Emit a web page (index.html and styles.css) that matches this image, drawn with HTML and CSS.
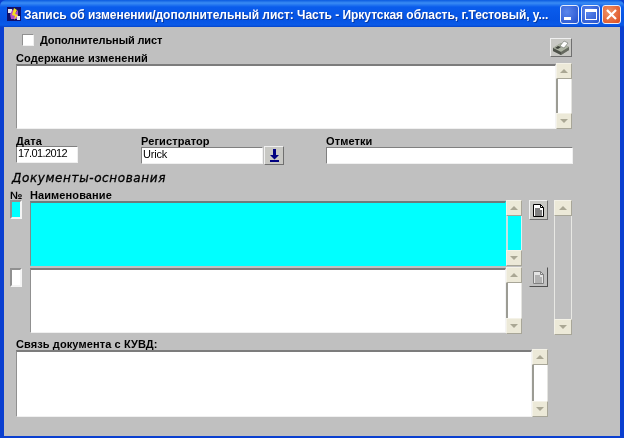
FILE: index.html
```html
<!DOCTYPE html>
<html lang="ru">
<head>
<meta charset="utf-8">
<title>Запись об изменении</title>
<link rel="stylesheet" href="styles.css">
</head>
<body>
<div class="window">
  <header class="titlebar">
    <svg class="app-icon" width="14" height="14" viewBox="0 0 14 14">
      <rect width="14" height="14" fill="#10106a"/>
      <rect x="1" y="2" width="4" height="4" fill="#e8e8f0"/>
      <path d="M3 7l3-5 2 4 3-3v9H4z" fill="#b050c8"/>
      <path d="M7 1l3 2-2 4 3 1-4 5 1-4-3-1z" fill="#f4e020"/>
      <rect x="10" y="9" width="3" height="4" fill="#e8e8f0"/>
    </svg>
    <div class="title-text">Запись об изменении/дополнительный лист: Часть - Иркутская область, г.Тестовый, у...</div>
    <div class="controls">
      <div class="ctl"><span class="min-glyph"></span></div>
      <div class="ctl"><span class="max-glyph"></span></div>
      <div class="ctl close">
        <svg width="13" height="13" viewBox="0 0 13 13"><path d="M2 2l9 9M11 2l-9 9" stroke="#fff" stroke-width="2.2" fill="none"/></svg>
      </div>
    </div>
  </header>
  <main class="client">
    <section class="top">
      <div class="head">
        <div>
          <div class="check-row">
            <span class="checkbox"></span>
            <span class="label check-label">Дополнительный лист</span>
          </div>
          <div class="label content-label">Содержание изменений</div>
        </div>
        <div class="btn print-btn">
          <svg width="18" height="16" viewBox="0 0 18 16">
            <path d="M1 8l8-5 8 4v3l-8 5-8-4z" fill="#7f8478"/>
            <path d="M1 8l8 4 8-5-8-4z" fill="#aeb4a4"/>
            <path d="M1 8l8 4v3l-8-4z" fill="#4e524a"/>
            <path d="M9 12l8-5v3l-8 5z" fill="#666a60"/>
            <path d="M8 6l4-5 4 2-4 5z" fill="#fff" stroke="#6a6e66" stroke-width=".6"/>
            <path d="M3 8l3-2 3 1-3 2z" fill="#3e423a"/>
          </svg>
        </div>
      </div>
      <div class="editor-row">
        <div class="field-box content-box"></div>
        <div class="sb">
          <div class="sb-btn"><span class="up"></span></div>
          <div class="sb-track"></div>
          <div class="sb-btn"><span class="down"></span></div>
        </div>
      </div>
    </section>

    <section class="meta">
      <div class="field date-field">
        <div class="label meta-label">Дата</div>
        <div class="input">17.01.2012</div>
      </div>
      <div class="field reg-field">
        <div class="label meta-label">Регистратор</div>
        <div class="input-group">
          <div class="input reg-input">Urick</div>
          <div class="btn arrow-btn">
            <svg width="9" height="13" viewBox="0 0 9 13"><path d="M3 0h3v6h3l-4.500 4.500L0 6h3z" fill="#000080"/><rect y="11" width="9" height="2" fill="#000080"/></svg>
          </div>
        </div>
      </div>
      <div class="field note-field">
        <div class="label meta-label">Отметки</div>
        <div class="input"></div>
      </div>
    </section>

    <h2 class="docs-title">Документы-основания</h2>
    <div class="docs-head">
      <span class="label num-col">№</span>
      <span class="label">Наименование</span>
    </div>
    <section class="docs">
      <div class="doc-rows">
        <div class="doc-row row-one">
          <div class="indicator current"></div>
          <div class="field-box doc-box current"></div>
          <div class="sb">
            <div class="sb-btn"><span class="up"></span></div>
            <div class="sb-track cyan"></div>
            <div class="sb-btn"><span class="down"></span></div>
          </div>
          <div class="btn doc-btn">
            <svg width="11" height="13" viewBox="0 0 11 13"><path d="M.5.5h7l3 3v9H.5z" fill="#fff" stroke="#000"/><path d="M7.500.5v3h3" fill="none" stroke="#000"/><path d="M2 5h5M2 7h7M2 9h7M2 11h7" stroke="#000"/></svg>
          </div>
        </div>
        <div class="doc-row row-two">
          <div class="indicator"></div>
          <div class="field-box doc-box"></div>
          <div class="sb">
            <div class="sb-btn"><span class="up"></span></div>
            <div class="sb-track"></div>
            <div class="sb-btn"><span class="down"></span></div>
          </div>
          <div class="btn doc-btn flat">
            <svg width="11" height="13" viewBox="0 0 11 13"><path d="M.5.5h7l3 3v9H.5z" fill="#e4e4e4" stroke="#808080"/><path d="M7.500.5v3h3" fill="none" stroke="#808080"/><path d="M2 5h5M2 7h7M2 9h7M2 11h7" stroke="#808080"/></svg>
          </div>
        </div>
      </div>
      <div class="sb outer-sb">
        <div class="sb-btn"><span class="up"></span></div>
        <div class="sb-track grey"></div>
        <div class="sb-btn"><span class="down"></span></div>
      </div>
    </section>

    <section class="link">
      <div class="label link-label">Связь документа с КУВД:</div>
      <div class="editor-row link-row">
        <div class="field-box link-box"></div>
        <div class="sb">
          <div class="sb-btn"><span class="up"></span></div>
          <div class="sb-track"></div>
          <div class="sb-btn"><span class="down"></span></div>
        </div>
      </div>
    </section>
  </main>
</div>
</body>
</html>
```
FILE: styles.css
```css
* { box-sizing: border-box; }
html, body { margin: 0; padding: 0; }
body { width: 624px; height: 438px; overflow: hidden; background: #c0c0c0; }

.window {
  width: 624px; height: 438px;
  display: flex; flex-direction: column;
  background: #0a3fd0;
  font-family: "Liberation Sans", Arial, sans-serif;
  filter: blur(0.35px);
}

.titlebar {
  height: 27px; flex: none;
  display: flex; align-items: center;
  padding: 1px 3px 0 7px;
  background: linear-gradient(#0a5ae0 0, #3a8cf4 3px, #0a5cec 7px, #0654e4 20px, #0a5ae8 25px, #0644c8 27px);
  border-radius: 6px 6px 0 0;
}
.app-icon { flex: none; }
.title-text {
  flex: 1; margin-left: 3px; min-width: 0; padding-top: 1px;
  color: #fff; font-size: 12px; font-weight: 700; letter-spacing: -0.03px;
  white-space: nowrap;
  text-shadow: 1px 1px 0 #0a3aa0;
}
.controls { display: flex; gap: 2px; flex: none; }
.ctl {
  width: 19px; height: 19px;
  display: flex; align-items: center; justify-content: center;
  background: radial-gradient(circle at 35% 35%, #5a86ec, #2450cc);
  border: 1px solid #e8eefc; border-radius: 3px;
}
.ctl.close { background: radial-gradient(circle at 35% 35%, #f09468, #dc4a1c); }
.min-glyph { width: 7px; height: 3px; background: #fff; margin: 9px 5px 0 0; }
.max-glyph { width: 12px; height: 11px; border: 1px solid #fff; border-top-width: 3px; }

.client {
  flex: 1; margin: 0 4px 2px 4px;
  background: #c0c0c0;
  min-height: 0;
}

.label {
  font-size: 11px; line-height: 11px; font-weight: 700; color: #000;
  letter-spacing: 0.1px; white-space: nowrap;
}
.check-label { letter-spacing: -0.12px; }

.top { padding: 7px 47px 0 12px; }
.head { display: flex; justify-content: space-between; height: 29px; }
.check-row { display: flex; align-items: center; margin-left: 6px; height: 12px; gap: 6px; }
.checkbox {
  width: 12px; height: 12px; background: #fff;
  border: 1px solid; border-color: #909090 #f0f0f0 #f0f0f0 #909090;
}
.content-label { margin-top: 7px; }
.print-btn { width: 22px; height: 19px; margin: 4px 1px 0 0; }

.btn {
  display: flex; align-items: center; justify-content: center;
  background: #c8c8c4; flex: none;
  border: 1px solid; border-color: #f0f0f0 #707070 #707070 #f0f0f0;
}

.editor-row { display: flex; }
.field-box {
  background: #fff;
  border-style: solid; border-width: 2px 1px 1px 1px;
  border-color: #7c7c7c #f4f4f4 #f0f0f0 #909090;
}
.top .editor-row { height: 66px; }
.content-box { width: 540px; margin-top: 1px; }

.sb { width: 16px; flex: none; display: flex; flex-direction: column; }
.sb-btn {
  height: 16px; flex: none;
  display: flex; align-items: center; justify-content: center;
  background: #ece9d8;
  border: 1px solid; border-color: #f4f2e8 #a8a698 #a8a698 #f4f2e8;
}
.up { border: 4px solid transparent; border-top-width: 0; border-bottom-color: #aaa794; }
.down { border: 4px solid transparent; border-bottom-width: 0; border-top-color: #aaa794; }
.sb-track {
  flex: 1; background: #fff;
  border-left: 2px solid #9c9c94; border-right: 1px solid #e4e4e0;
}
.sb-track.grey { background: #c0c0c0; border-left: 1px solid #e8e8e4; border-right: 1px solid #e8e8e4; }
.sb-track.cyan { background: #00ffff; border-left: 2px solid #c8e4e4; border-right: 1px solid #d8f4f4; }

.meta { display: flex; padding: 7px 0 0 12px; height: 38px; }
.meta-label { margin-bottom: -1px; }
.field { flex: none; }
.input {
  height: 17px; width: 100%;
  background: #fff; color: #000;
  font-size: 11px; line-height: 12px; padding-left: 1px;
  letter-spacing: -0.6px;
  border: 1px solid; border-color: #808080 #f0f0f0 #f0f0f0 #808080;
}
.date-field { width: 62px; }
.reg-field { width: 142px; margin-left: 63px; }
.input-group { display: flex; align-items: flex-start; }
.reg-input { width: 122px; flex: none; margin-top: 1px; letter-spacing: -0.2px; }
.arrow-btn { width: 20px; height: 19px; margin-left: 1px; }
.note-field { width: 247px; margin-left: 43px; }
.note-field .input { margin-top: 1px; }

.docs-title {
  margin: 0 0 0 8px; height: 23px; padding-top: 4px;
  font-size: 12px; line-height: 14px; font-weight: 400; font-style: italic;
  font-family: "DejaVu Sans", sans-serif; letter-spacing: 0.6px; color: #000;
  -webkit-text-stroke: 0.3px #000;
  white-space: nowrap;
}
.docs-head { display: flex; padding-left: 6px; height: 10px; align-items: flex-start; }
.num-col { width: 20px; }

.docs { display: flex; padding-left: 6px; height: 135px; align-items: flex-start; }
.doc-rows { width: 538px; flex: none; }
.doc-row { display: flex; align-items: flex-start; }
.row-one { height: 67px; }
.row-two { height: 68px; }
.row-one .sb { height: 66px; }
.row-two .sb { height: 67px; }
.indicator {
  width: 12px; height: 19px; background: #fff;
  border: 2px solid; border-color: #909090 #f4f4f4 #f4f4f4 #909090;
  flex: none; margin-right: 8px;
}
.row-two .indicator { margin-top: 1px; }
.indicator.current { background: #00ffff; }
.doc-box { width: 477px; height: 65px; margin-top: 1px; }
.doc-box.current { background: #00ffff; border-color: #6c7c7c #00ffff #00ffff #7c8c8c; }
.doc-btn { width: 19px; height: 20px; margin-left: 7px; }
.doc-btn.flat { background: #c0c0c0; border-color: #c0c0c0 #505050 #505050 #c0c0c0; }
.outer-sb { margin-left: 6px; height: 135px; width: 18px; }

.link { padding: 4px 0 0 12px; }
.link-label { margin-bottom: -1px; }
.link-row { height: 68px; }
.link-box { width: 516px; margin-top: 1px; }
```
